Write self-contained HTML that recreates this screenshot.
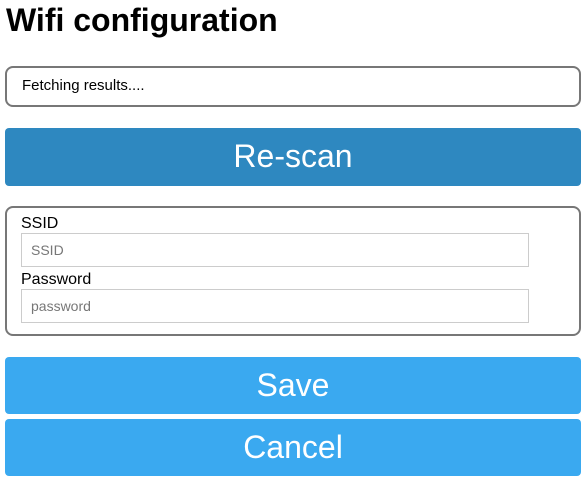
<!DOCTYPE html><html><head><style>
body{margin:0;width:588px;height:483px;background:#fff;font-family:"Liberation Sans",Arial,sans-serif;position:relative;overflow:hidden}
div{position:absolute;box-sizing:border-box}
.t{left:6px;top:2px;font-size:32px;font-weight:bold;color:#000}
.box{left:5px;width:576px;border:2px solid #777;border-radius:8px}
.btn{left:5px;width:576px;border-radius:4px;color:#fff;font-size:32px;text-align:center}
.lab{left:21px;font-size:16px;color:#000}
.in{left:21px;width:508px;height:34px;border:1px solid #ccc;font-size:14px;color:#777;padding-left:9px;line-height:32px}
</style></head><body>
<div class="t">Wifi configuration</div>
<div class="box" style="top:66px;height:41px;font-size:15px;padding:9px 0 0 15px">Fetching results....</div>
<div class="btn" style="top:128px;height:58px;line-height:56px;background:#2e88c0">Re-scan</div>
<div class="box" style="top:206px;height:130px"></div>
<div class="lab" style="top:215px">SSID</div>
<div class="in" style="top:233px">SSID</div>
<div class="lab" style="top:271px">Password</div>
<div class="in" style="top:289px">password</div>
<div class="btn" style="top:357px;height:57px;line-height:56px;background:#3aa9f0">Save</div>
<div class="btn" style="top:419px;height:57px;line-height:56px;background:#3aa9f0">Cancel</div>
</body></html>
